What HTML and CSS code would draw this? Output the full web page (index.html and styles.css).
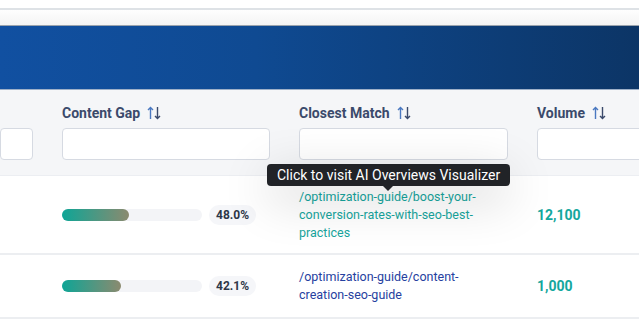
FILE: index.html
```html
<!DOCTYPE html>
<html lang="en">
<head>
    <meta charset="UTF-8">
    <meta name="viewport" content="width=device-width, initial-scale=1.0">
    <title>Content Gap Report</title>
    <link rel="stylesheet" href="styles.css">
</head>
<body>
    <div class="topbar"></div>
    <div class="subbar"></div>
    <div class="banner"></div>

    <div class="wrap">
    <div class="table">
        <div class="head">
            <div class="cell">
                <div class="title">&nbsp;</div>
                <input type="text" class="filter">
            </div>
            <div class="cell">
                <div class="title">Content Gap <svg class="sort" viewBox="0 0 14 14" width="14" height="14"><path d="M3.5 13V1.5M1 4l2.5-2.5L6 4" stroke="#4a78c0" stroke-width="1.4" fill="none"/><path d="M10.5 1v11.5M8 10l2.5 2.5L13 10" stroke="#3b4a6b" stroke-width="1.4" fill="none"/></svg></div>
                <input type="text" class="filter">
            </div>
            <div class="cell">
                <div class="title">Closest Match <svg class="sort" viewBox="0 0 14 14" width="14" height="14"><path d="M3.5 13V1.5M1 4l2.5-2.5L6 4" stroke="#4a78c0" stroke-width="1.4" fill="none"/><path d="M10.5 1v11.5M8 10l2.5 2.5L13 10" stroke="#3b4a6b" stroke-width="1.4" fill="none"/></svg></div>
                <input type="text" class="filter">
                <div class="tooltip">Click to visit AI Overviews Visualizer</div>
            </div>
            <div class="cell">
                <div class="title">Volume <svg class="sort" viewBox="0 0 14 14" width="14" height="14"><path d="M3.5 13V1.5M1 4l2.5-2.5L6 4" stroke="#4a78c0" stroke-width="1.4" fill="none"/><path d="M10.5 1v11.5M8 10l2.5 2.5L13 10" stroke="#3b4a6b" stroke-width="1.4" fill="none"/></svg></div>
                <input type="text" class="filter">
            </div>
        </div>

        <div class="row row-tall">
            <div class="cell"></div>
            <div class="cell gap">
                <div class="bar"><div class="fill" style="width: 48%"></div></div>
                <span class="pct">48.0%</span>
            </div>
            <div class="cell">
                <a class="link hover" href="#">/optimization-guide/boost-your-conversion-rates-with-seo-best-practices</a>
            </div>
            <div class="cell"><span class="volume">12,100</span></div>
        </div>

        <div class="row">
            <div class="cell"></div>
            <div class="cell gap">
                <div class="bar"><div class="fill" style="width: 42.1%"></div></div>
                <span class="pct">42.1%</span>
            </div>
            <div class="cell">
                <a class="link" href="#">/optimization-guide/content-creation-seo-guide</a>
            </div>
            <div class="cell"><span class="volume">1,000</span></div>
        </div>
    </div>
    </div>
</body>
</html>
```

FILE: styles.css
```css
body{
    margin: 0;
    background: #fff;
    font-family: Roboto, "Liberation Sans", sans-serif;
    overflow: hidden;
}
.topbar{
    height: 8px;
    border-bottom: 2px solid #dee2e6;
}
.subbar{
    height: 15px;
    background: linear-gradient(#fefefe, #f4f4f4);
    border-bottom: 1px solid #9aa3ad;
}
.banner{
    height: 63px;
    background: linear-gradient(90deg, #1150a1 0%, #0f4a92 40%, #0c3566 100%);
    border-bottom: 1px solid #9eb0c8;
}

.wrap{
    overflow: hidden;
}
.table{
    display: grid;
    grid-template-columns: 48px 237px 238px 237px;
}
.head, .row{
    display: contents;
}
.cell{
    padding: 0 15px 0 14px;
    position: relative;
}
.head .cell{
    background: #f5f6f8;
    padding-top: 14px;
    padding-bottom: 15px;
    border-bottom: 1px solid #eceef2;
}
.head .cell:first-child, .row .cell:first-child{
    padding-left: 0;
}
.title{
    font-size: 14px;
    font-weight: 700;
    color: #3b4a6b;
    height: 18px;
    line-height: 18px;
    margin-bottom: 6px;
    display: flex;
    align-items: center;
    white-space: nowrap;
}
.sort{
    margin-left: 7px;
}
.filter{
    display: block;
    box-sizing: border-box;
    width: 100%;
    height: 32px;
    border: 1px solid #d6dae2;
    border-radius: 4px;
    background: #fff;
}

.row .cell{
    height: 62px;
    border-bottom: 2px solid #eceef1;
    display: flex;
    align-items: center;
}
.row-tall .cell{
    height: 77px;
}
.gap{
    gap: 7px;
}
.bar{
    width: 140px;
    height: 12px;
    border-radius: 6px;
    background: #f3f4f7;
    flex-shrink: 0;
}
.fill{
    height: 100%;
    border-radius: 6px;
    background: linear-gradient(90deg, #0ea596, #8b8a6f);
}
.pct{
    font-size: 12px;
    font-weight: 700;
    color: #2d3748;
    background: #f5f6f9;
    border-radius: 10px;
    padding: 3px 7px;
    line-height: 14px;
}
.link{
    font-size: 12.5px;
    line-height: 18px;
    color: #2641a0;
    text-decoration: none;
    max-width: 198px;
}
.link.hover{
    color: #17a59d;
}
.volume{
    font-size: 14px;
    font-weight: 700;
    color: #13a79d;
}

.tooltip{
    position: absolute;
    left: -18px;
    top: 74px;
    z-index: 5;
    background: #212327;
    color: #fff;
    font-size: 14px;
    line-height: 22px;
    padding: 0 10px;
    border-radius: 4px;
    white-space: nowrap;
    box-shadow: 0 12px 50px rgba(0, 0, 0, 0.2);
}
.tooltip::after{
    content: "";
    position: absolute;
    left: 116px;
    top: 22px;
    border: 5px solid transparent;
    border-top-color: #212327;
}
```
